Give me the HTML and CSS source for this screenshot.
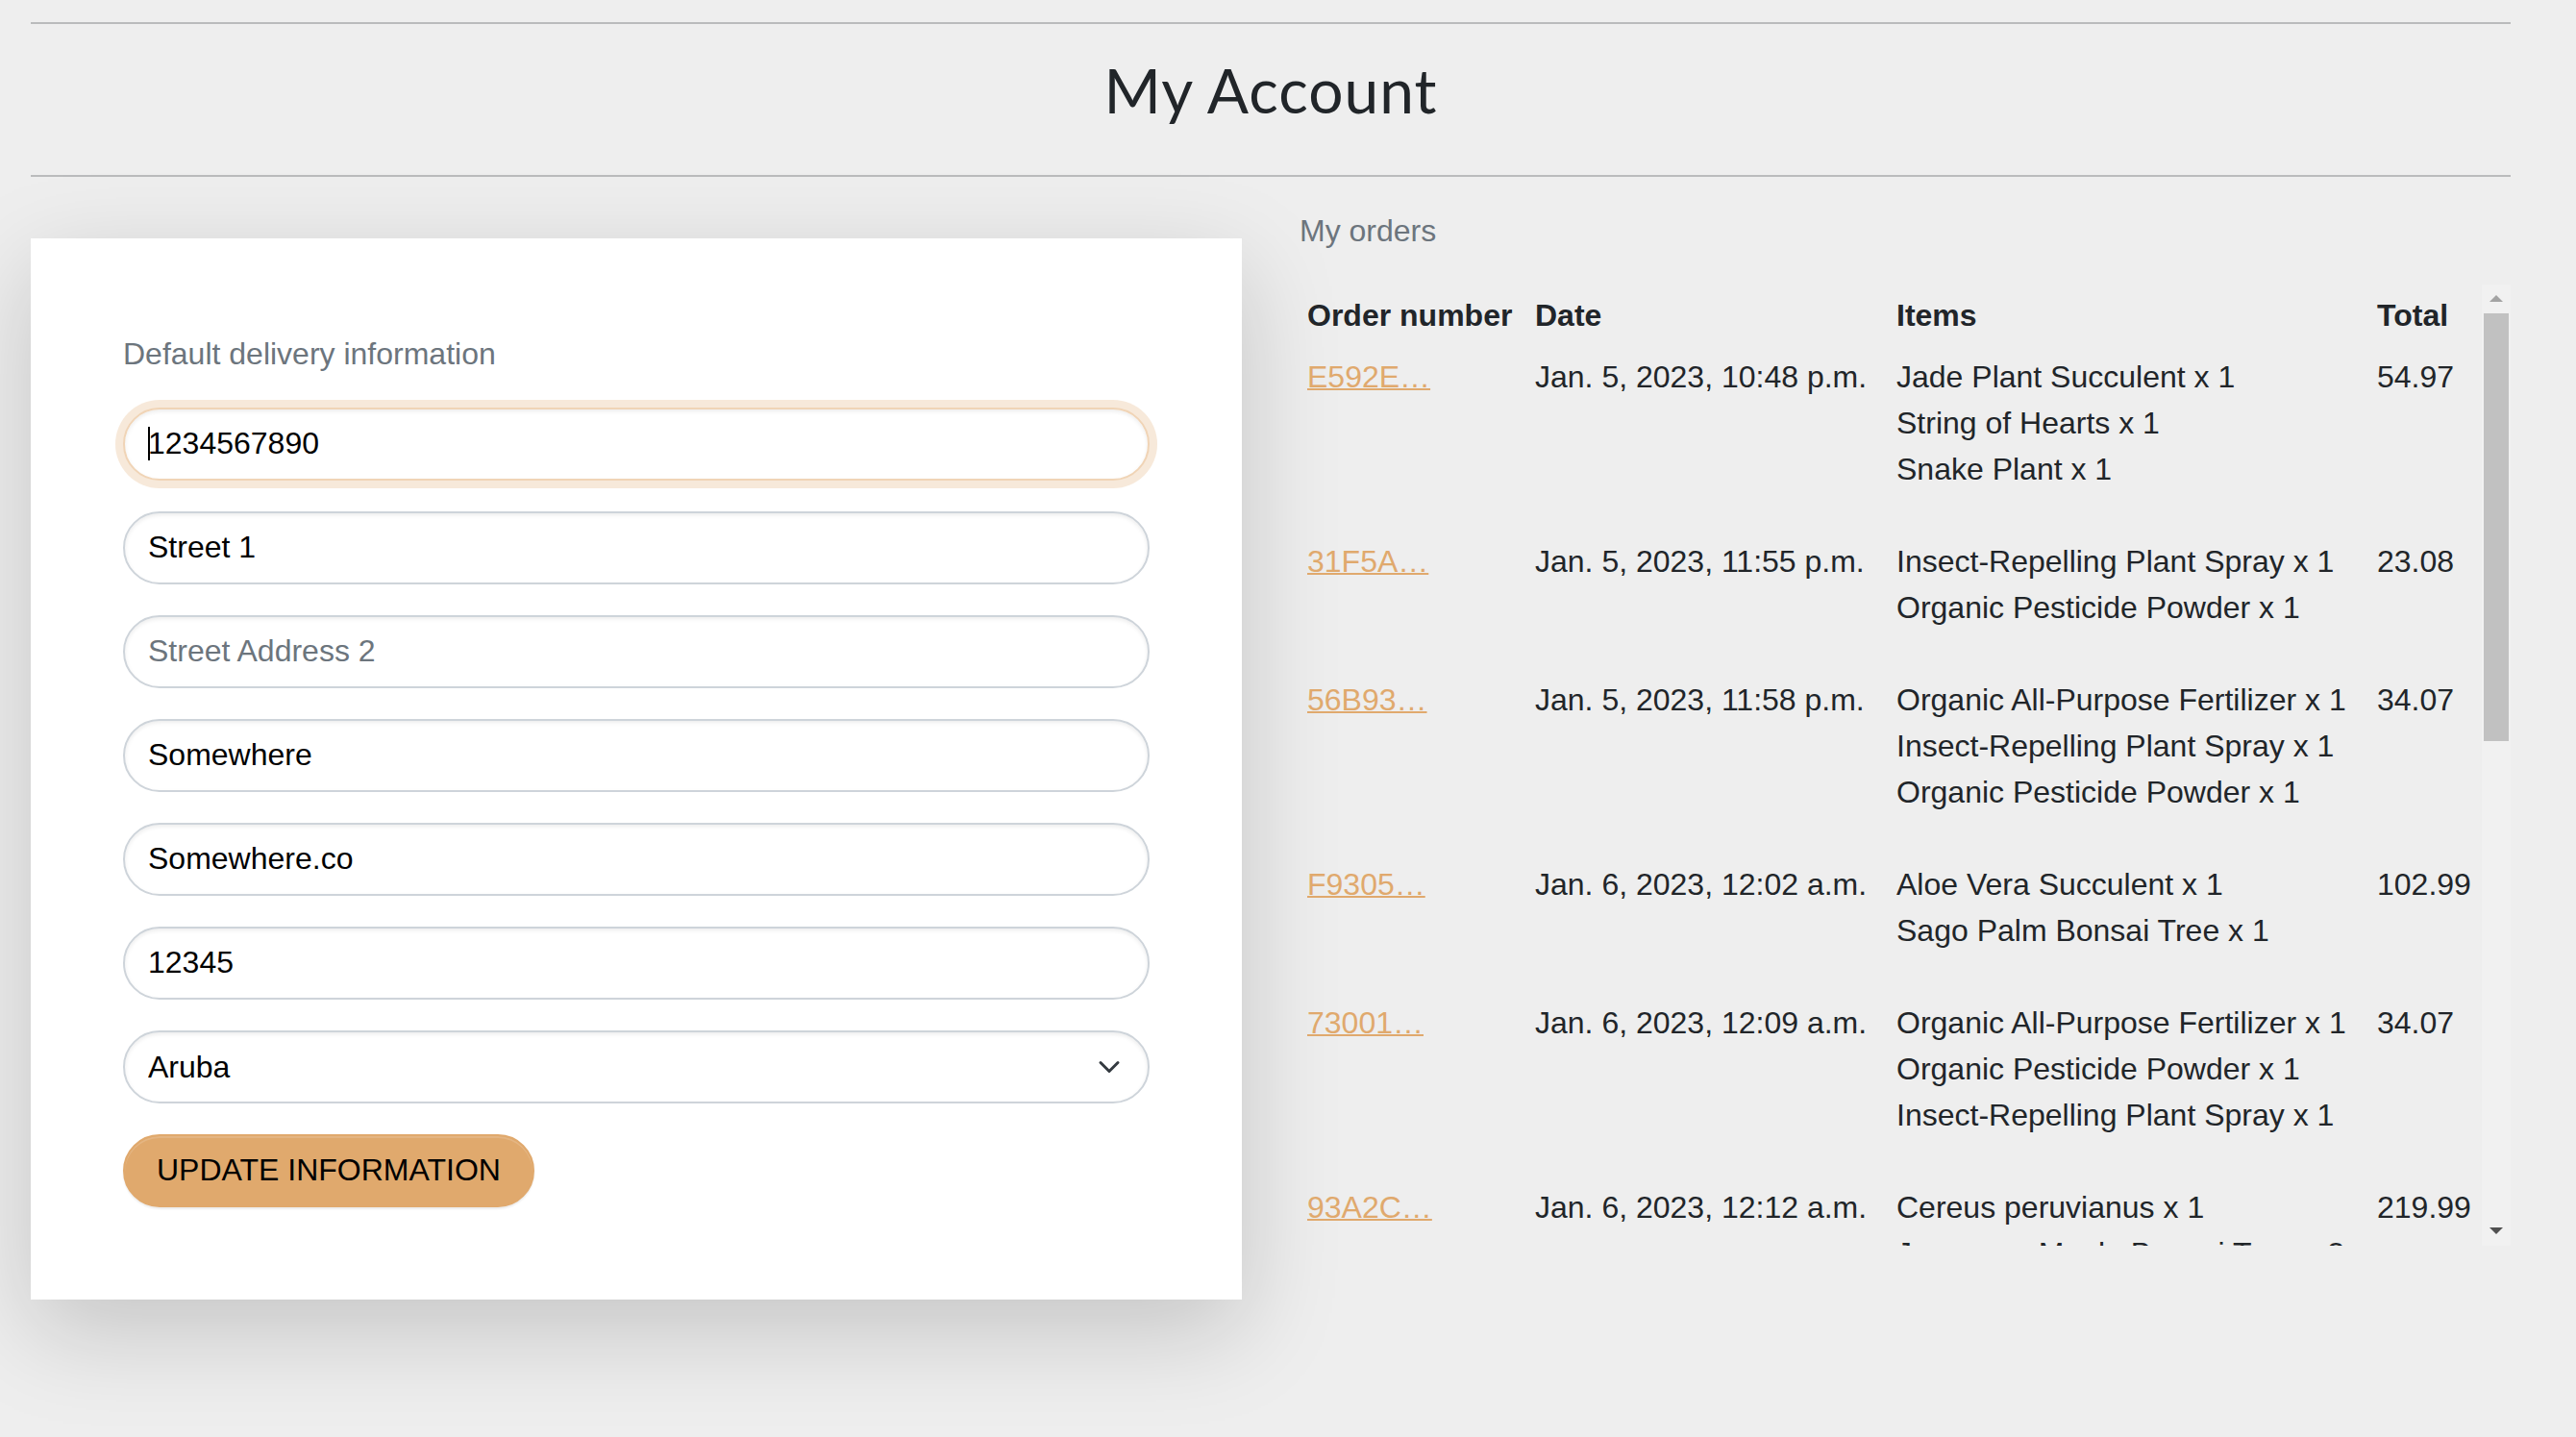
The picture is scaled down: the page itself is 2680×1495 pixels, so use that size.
FILE: index.html
```html
<!DOCTYPE html>
<html lang="en">
<head>
<meta charset="utf-8">
<title>My Account</title>
<link rel="stylesheet" href="styles.css">
</head>
<body>
<div class="page">
  <header class="page-header">
    <hr class="rule">
    <h2 class="title">My Account</h2>
    <hr class="rule">
  </header>
  <main class="columns">
    <section class="card">
      <h6 class="card-label">Default delivery information</h6>
      <form class="form">
        <div class="field field-focus">
          <input class="control control-focus" type="text" value="1234567890">
        </div>
        <input class="control" type="text" value="Street 1">
        <input class="control" type="text" placeholder="Street Address 2">
        <input class="control" type="text" value="Somewhere">
        <input class="control" type="text" value="Somewhere.co">
        <input class="control" type="text" value="12345">
        <div class="field">
          <select class="control select"><option>Aruba</option></select>
          <svg class="chevron" viewBox="0 0 16 16" width="24" height="24"><path d="m2 5 6 6 6-6" fill="none" stroke="#343a40" stroke-width="2" stroke-linecap="round" stroke-linejoin="round"/></svg>
        </div>
        <div class="actions">
          <button class="btn" type="button">Update information</button>
        </div>
      </form>
    </section>
    <section class="orders">
      <p class="orders-label">My orders</p>
      <div class="orders-box">
        <div class="orders-scroll">
          <table class="orders-table">
            <colgroup>
              <col class="c-num"><col class="c-date"><col class="c-items"><col class="c-total">
            </colgroup>
            <thead>
              <tr><th>Order number</th><th>Date</th><th>Items</th><th>Total</th></tr>
            </thead>
            <tbody>
              <tr>
                <td><a href="#" class="order-link">E592E…</a></td>
                <td>Jan. 5, 2023, 10:48 p.m.</td>
                <td><ul class="items"><li>Jade Plant Succulent x 1</li><li>String of Hearts x 1</li><li>Snake Plant x 1</li></ul></td>
                <td>54.97</td>
              </tr>
              <tr>
                <td><a href="#" class="order-link">31F5A…</a></td>
                <td>Jan. 5, 2023, 11:55 p.m.</td>
                <td><ul class="items"><li>Insect-Repelling Plant Spray x 1</li><li>Organic Pesticide Powder x 1</li></ul></td>
                <td>23.08</td>
              </tr>
              <tr>
                <td><a href="#" class="order-link">56B93…</a></td>
                <td>Jan. 5, 2023, 11:58 p.m.</td>
                <td><ul class="items"><li>Organic All-Purpose Fertilizer x 1</li><li>Insect-Repelling Plant Spray x 1</li><li>Organic Pesticide Powder x 1</li></ul></td>
                <td>34.07</td>
              </tr>
              <tr>
                <td><a href="#" class="order-link">F9305…</a></td>
                <td>Jan. 6, 2023, 12:02 a.m.</td>
                <td><ul class="items"><li>Aloe Vera Succulent x 1</li><li>Sago Palm Bonsai Tree x 1</li></ul></td>
                <td>102.99</td>
              </tr>
              <tr>
                <td><a href="#" class="order-link">73001…</a></td>
                <td>Jan. 6, 2023, 12:09 a.m.</td>
                <td><ul class="items"><li>Organic All-Purpose Fertilizer x 1</li><li>Organic Pesticide Powder x 1</li><li>Insect-Repelling Plant Spray x 1</li></ul></td>
                <td>34.07</td>
              </tr>
              <tr>
                <td><a href="#" class="order-link">93A2C…</a></td>
                <td>Jan. 6, 2023, 12:12 a.m.</td>
                <td><ul class="items"><li>Cereus peruvianus x 1</li><li>Japanese Maple Bonsai Tree x 2</li></ul></td>
                <td>219.99</td>
              </tr>
            </tbody>
          </table>
        </div>
        <div class="scrollbar" aria-hidden="true">
          <div class="sb-button"><span class="arrow-up"></span></div>
          <div class="sb-thumb"></div>
          <div class="sb-track"></div>
          <div class="sb-button"><span class="arrow-down"></span></div>
        </div>
      </div>
    </section>
  </main>
</div>
</body>
</html>
```

FILE: styles.css
```css
* { box-sizing: border-box; }

html, body {
  margin: 0;
  padding: 0;
  background: #eeeeee;
}

body {
  font-family: "Liberation Sans", Arial, sans-serif;
  font-size: 32px;
  line-height: 1.5;
  color: #212529;
}

.page {
  min-height: 100vh;
  padding: 23px 68px 0 32px;
}

.page-header {
  display: flex;
  flex-direction: column;
}

.rule {
  margin: 0;
  height: 0;
  border: 0;
  border-top: 2px solid #babbbc;
}

.title {
  margin: 31px 0 49px;
  font-family: Lato, "Open Sans", sans-serif;
  font-weight: 400;
  font-size: 64px;
  line-height: 1.2;
  text-align: center;
  color: #212529;
  letter-spacing: 1px;
}

.columns {
  display: grid;
  grid-template-columns: 1260px 1260px;
  column-gap: 60px;
  align-items: start;
}

/* Left card */
.card {
  margin-top: 64px;
  background: #ffffff;
  padding: 96px;
  box-shadow: 0 32px 96px rgba(0, 0, 0, 0.175);
}

.card-label {
  margin: 0 0 32px;
  font-size: 32px;
  font-weight: 400;
  line-height: 1.5;
  color: #6c757d;
}

.form {
  display: flex;
  flex-direction: column;
  gap: 32px;
}

.field {
  position: relative;
}

.control {
  display: block;
  width: 100%;
  height: 76px;
  padding: 0 24px;
  border: 2px solid #ced4da;
  border-radius: 999px;
  background: #ffffff;
  font-family: "Liberation Sans", Arial, sans-serif;
  font-size: 32px;
  color: #000000;
  box-shadow: inset 0 2px 4px rgba(0, 0, 0, 0.075);
  outline: none;
}

.control::placeholder {
  color: #6c757d;
  opacity: 1;
}

.control-focus {
  border-color: #f0d4b6;
  box-shadow: inset 0 2px 4px rgba(0, 0, 0, 0.075), 0 0 0 8px rgba(224, 169, 109, 0.25);
}

.field-focus::after {
  content: "";
  position: absolute;
  left: 26px;
  top: 20px;
  width: 2px;
  height: 35px;
  background: #000000;
}

.select {
  appearance: none;
  -webkit-appearance: none;
  padding-right: 72px;
}

.chevron {
  position: absolute;
  right: 30px;
  top: 26px;
  pointer-events: none;
}

.actions {
  display: flex;
}

.btn {
  height: 76px;
  padding: 0 33px;
  border: 2px solid #e0a96d;
  border-radius: 999px;
  background: #e0a96d;
  font-family: "Liberation Sans", Arial, sans-serif;
  font-size: 32px;
  text-transform: uppercase;
  color: #000000;
  box-shadow: inset 0 2px 0 rgba(255, 255, 255, 0.15), 0 2px 2px rgba(0, 0, 0, 0.075);
}

/* Orders */
.orders {
  padding-top: 32px;
}

.orders-label {
  margin: 0 0 32px;
  color: #6c757d;
}

.orders-box {
  display: flex;
  height: 1000px;
}

.orders-scroll {
  flex: 1;
  overflow: hidden;
}

.orders-table {
  width: 100%;
  table-layout: fixed;
  border-collapse: collapse;
}

.c-num { width: 237px; }
.c-date { width: 376px; }
.c-items { width: 500px; }
.c-total { width: 117px; }

.orders-table th,
.orders-table td {
  padding: 8px;
  text-align: left;
  vertical-align: top;
  white-space: nowrap;
}

.orders-table th {
  font-weight: 700;
}

.order-link {
  color: #e0a96d;
  text-decoration: underline;
  text-decoration-thickness: 2px;
}

.items {
  margin: 0 0 32px;
  padding: 0;
  list-style: none;
}

/* Scrollbar */
.scrollbar {
  width: 30px;
  display: flex;
  flex-direction: column;
  background: #f1f1f1;
}

.sb-button {
  height: 30px;
  display: flex;
  align-items: center;
  justify-content: center;
}

.sb-thumb {
  height: 445px;
  margin: 0 2px;
  background: #c1c1c1;
}

.sb-track {
  flex: 1;
}

.arrow-up {
  width: 0;
  height: 0;
  border-left: 7px solid transparent;
  border-right: 7px solid transparent;
  border-bottom: 7px solid #a3a3a3;
}

.arrow-down {
  width: 0;
  height: 0;
  border-left: 7px solid transparent;
  border-right: 7px solid transparent;
  border-top: 7px solid #505050;
}
```
